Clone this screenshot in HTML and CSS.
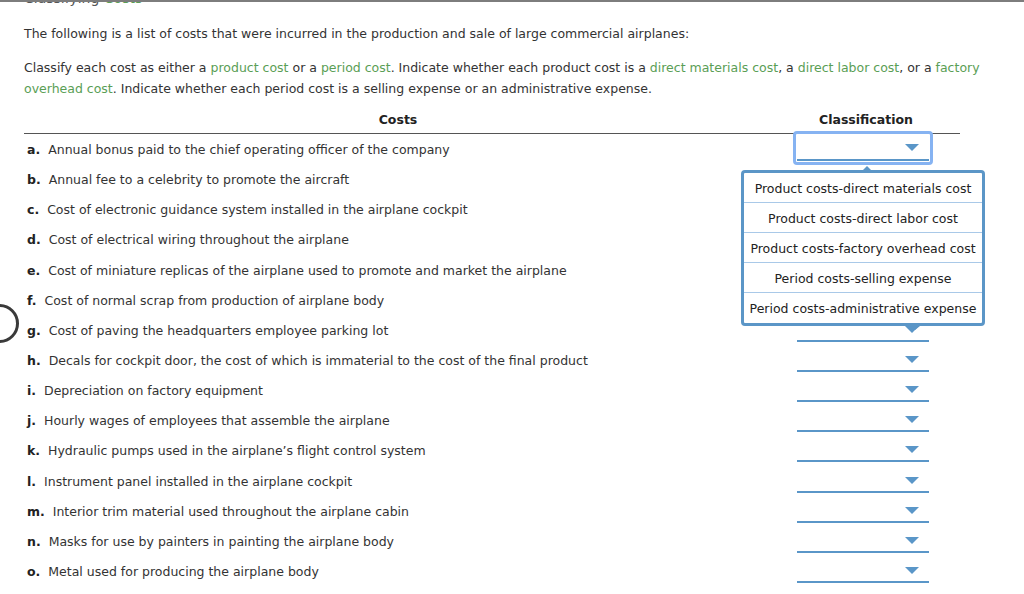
FILE: index.html
```html
<!DOCTYPE html>
<html>
<head>
<meta charset="utf-8">
<link rel="stylesheet" href="styles.css">
</head>
<body>
<div class="title-strip"><div class="title">Classifying <span class="g">Costs</span></div></div>
<div class="content">
  <p class="p1">The following is a list of costs that were incurred in the production and sale of large commercial airplanes:</p>
  <p class="p2">Classify each cost as either a <span class="g">product cost</span> or a <span class="g">period cost</span>. Indicate whether each product cost is a <span class="g">direct materials cost</span>, a <span class="g">direct labor cost</span>, or a <span class="g">factory overhead cost</span>. Indicate whether each period cost is a selling expense or an administrative expense.</p>

  <div class="table">
    <div class="th th-costs">Costs</div>
    <div class="th th-class">Classification</div>

    <div class="cell cost"><b>a.</b> Annual bonus paid to the chief operating officer of the company</div>
    <div class="cell sel">
      <div class="focus"><div class="dd"><span class="arrow"></span></div></div>
      <div class="menu">
        <div class="item">Product costs-direct materials cost</div>
        <div class="item">Product costs-direct labor cost</div>
        <div class="item">Product costs-factory overhead cost</div>
        <div class="item">Period costs-selling expense</div>
        <div class="item">Period costs-administrative expense</div>
      </div>
    </div>

    <div class="cell cost"><b>b.</b> Annual fee to a celebrity to promote the aircraft</div>
    <div class="cell sel"><div class="dd"><span class="arrow"></span></div></div>
    <div class="cell cost"><b>c.</b> Cost of electronic guidance system installed in the airplane cockpit</div>
    <div class="cell sel"><div class="dd"><span class="arrow"></span></div></div>
    <div class="cell cost"><b>d.</b> Cost of electrical wiring throughout the airplane</div>
    <div class="cell sel"><div class="dd"><span class="arrow"></span></div></div>
    <div class="cell cost"><b>e.</b> Cost of miniature replicas of the airplane used to promote and market the airplane</div>
    <div class="cell sel"><div class="dd"><span class="arrow"></span></div></div>
    <div class="cell cost"><b>f.</b> Cost of normal scrap from production of airplane body</div>
    <div class="cell sel"><div class="dd"><span class="arrow"></span></div></div>
    <div class="cell cost"><b>g.</b> Cost of paving the headquarters employee parking lot</div>
    <div class="cell sel"><div class="dd"><span class="arrow"></span></div></div>
    <div class="cell cost"><b>h.</b> Decals for cockpit door, the cost of which is immaterial to the cost of the final product</div>
    <div class="cell sel"><div class="dd"><span class="arrow"></span></div></div>
    <div class="cell cost"><b>i.</b> Depreciation on factory equipment</div>
    <div class="cell sel"><div class="dd"><span class="arrow"></span></div></div>
    <div class="cell cost"><b>j.</b> Hourly wages of employees that assemble the airplane</div>
    <div class="cell sel"><div class="dd"><span class="arrow"></span></div></div>
    <div class="cell cost"><b>k.</b> Hydraulic pumps used in the airplane’s flight control system</div>
    <div class="cell sel"><div class="dd"><span class="arrow"></span></div></div>
    <div class="cell cost"><b>l.</b> Instrument panel installed in the airplane cockpit</div>
    <div class="cell sel"><div class="dd"><span class="arrow"></span></div></div>
    <div class="cell cost"><b>m.</b> Interior trim material used throughout the airplane cabin</div>
    <div class="cell sel"><div class="dd"><span class="arrow"></span></div></div>
    <div class="cell cost"><b>n.</b> Masks for use by painters in painting the airplane body</div>
    <div class="cell sel"><div class="dd"><span class="arrow"></span></div></div>
    <div class="cell cost"><b>o.</b> Metal used for producing the airplane body</div>
    <div class="cell sel"><div class="dd"><span class="arrow"></span></div></div>
  </div>
</div>
<div class="ring"></div>
</body>
</html>
```
FILE: styles.css
```css
html, body { margin: 0; padding: 0; background: #fff; }
body {
  font-family: "DejaVu Sans", Verdana, sans-serif;
  font-size: 12.5px;
  color: #333;
  width: 1024px;
  height: 594px;
  overflow: hidden;
  position: relative;
}
.g { color: #5a9e55; }
.title-strip {
  height: 5px;
  overflow: hidden;
  border-top: 2px solid #7d7d7d;
}
.title {
  padding-left: 24px;
  margin-top: -12px;
  font-size: 14px;
  line-height: 16px;
  color: #555;
}
.content { padding-left: 24px; }
.p1 { margin: 16px 0 0; line-height: 21px; }
.p2 { margin: 13px 0 0; line-height: 21px; width: 975px; }
.table {
  display: grid;
  grid-template-columns: 748px 188px;
  grid-template-rows: 26px;
  grid-auto-rows: 30.15px;
  margin-top: 9px;
  width: 936px;
}
.th {
  grid-row: 1;
  font-weight: bold;
  color: #222;
  text-align: center;
  height: 26px;
  line-height: 20px;
  padding-top: 2px;
  border-bottom: 1px solid #555;
  box-sizing: border-box;
}
.cell { height: 30px; }
.cost {
  line-height: 32px;
  padding-left: 3px;
  color: #333;
  white-space: nowrap;
}
.cost b { color: #222; margin-right: 4px; }
.sel { position: relative; }
.dd {
  position: relative;
  width: 132px;
  height: 27px;
  margin: 0 0 0 25px;
  border-bottom: 2px solid #5a96c8;
  box-sizing: border-box;
}
.arrow {
  position: absolute;
  right: 10px;
  top: 11px;
  width: 0; height: 0;
  border-left: 7px solid transparent;
  border-right: 7px solid transparent;
  border-top: 7px solid #5a96c8;
}
.focus {
  position: absolute;
  left: 21px;
  top: -3px;
  width: 140px;
  height: 34px;
  border: 3px solid #86b3f2;
  border-radius: 4px;
  box-sizing: border-box;
  background: #fff;
}
.focus .dd { margin: 0 0 0 1px; height: 27px; width: 132px; }
.focus .arrow { top: 10px; }
.menu {
  position: absolute;
  left: -31px;
  top: 36px;
  width: 244px;
  border: 3px solid #5b96c7;
  border-radius: 4px;
  background: #fff;
  box-sizing: border-box;
  z-index: 5;
}
.menu::before {
  content: "";
  position: absolute;
  left: 118px;
  top: -7px;
  border-left: 5px solid transparent;
  border-right: 5px solid transparent;
  border-bottom: 5px solid #5b96c7;
}
.menu::after {
  content: "";
  position: absolute;
  left: 166px;
  bottom: -7px;
  border-left: 5px solid transparent;
  border-right: 5px solid transparent;
  border-top: 4px solid #5b96c7;
}
.item {
  height: 30px;
  line-height: 32px;
  text-align: center;
  color: #222;
  border-bottom: 1px solid #a9c9e8;
  box-sizing: border-box;
  white-space: nowrap;
}
.item:last-child { border-bottom: 0; }
.ring {
  position: absolute;
  left: -20px;
  top: 304px;
  width: 33px;
  height: 33px;
  border: 3px solid #3a3a3a;
  border-radius: 50%;
}
```
